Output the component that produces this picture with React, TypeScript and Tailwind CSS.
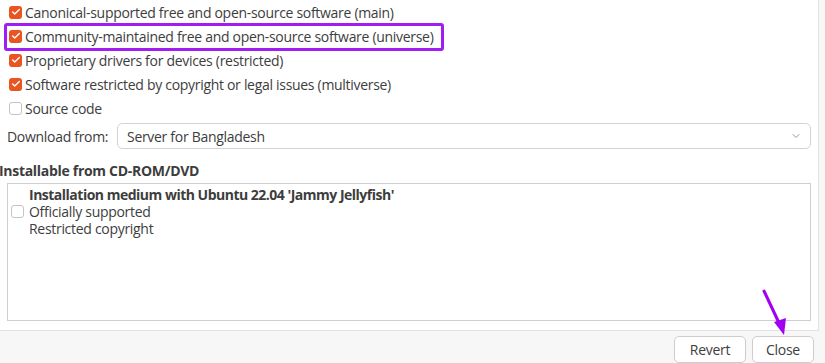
import { Check, ChevronDown } from "lucide-react";

const sources = [
  { label: "Canonical-supported free and open-source software (main)", checked: true },
  { label: "Community-maintained free and open-source software (universe)", checked: true },
  { label: "Proprietary drivers for devices (restricted)", checked: true },
  { label: "Software restricted by copyright or legal issues (multiverse)", checked: true },
  { label: "Source code", checked: false },
];

function Box({ checked }: { checked: boolean }) {
  if (checked) {
    return (
      <span className="flex h-[13px] w-[13px] shrink-0 items-center justify-center rounded-[3px] bg-[#e95420]">
        <Check className="h-[10px] w-[10px] text-white" strokeWidth={3.5} />
      </span>
    );
  }
  return (
    <span className="h-[13px] w-[13px] shrink-0 rounded-[3px] border border-[#c4c4c4] bg-white" />
  );
}

export default function App() {
  return (
    <div
      className="relative flex h-[363px] w-[825px] flex-col overflow-hidden bg-[#f7f7f7] text-[14px] tracking-[-0.3px] text-[#3d3d3d]"
      style={{ fontFamily: '"Open Sans", "Noto Sans", sans-serif' }}
    >
      <div className="flex h-[331px] w-[819px] flex-col border-r border-b border-[#e2e2e2] bg-white">
        <div className="flex flex-col pl-[9px]">
          {sources.map((s) => (
            <label key={s.label} className="flex h-[24px] items-center gap-[3px]">
              <Box checked={s.checked} />
              <span>{s.label}</span>
            </label>
          ))}
        </div>

        <div className="mt-[3px] flex items-center pl-[7px] pr-[7px]">
          <span className="w-[110px]">Download from:</span>
          <div className="flex h-[26px] flex-1 items-center justify-between rounded-[5px] border border-[#d3d3d3] pl-[9px] pr-[8px]">
            <span>Server for Bangladesh</span>
            <ChevronDown className="h-[12px] w-[12px] text-[#777]" strokeWidth={1.5} />
          </div>
        </div>

        <p className="mt-[12px] ml-[-1px] font-bold leading-[20px]">Installable from CD-ROM/DVD</p>

        <div className="mx-[7px] mt-[2px] h-[138px] border border-[#cfcfcf]">
          <div className="flex items-center gap-[5px] pl-[3px] pt-[2px]">
            <Box checked={false} />
            <div className="flex flex-col leading-[17px]">
              <span className="font-bold tracking-[-0.5px]">Installation medium with Ubuntu 22.04 'Jammy Jellyfish'</span>
              <span>Officially supported</span>
              <span>Restricted copyright</span>
            </div>
          </div>
        </div>
      </div>

      <div className="flex flex-1 items-end justify-end gap-[6px] pr-[11px]">
        <button className="h-[27px] w-[72px] rounded-[5px] border border-[#cdcdcd] bg-white">
          Revert
        </button>
        <button className="h-[27px] w-[62px] rounded-[5px] border border-[#cdcdcd] bg-white">
          Close
        </button>
      </div>

      <div className="absolute left-[4px] top-[23px] h-[28px] w-[440px] rounded-[3px] border-[3px] border-[#a11ef2]" />

      <svg className="absolute left-[755px] top-[285px]" width="40" height="55" viewBox="0 0 40 55">
        <line x1="9" y1="6" x2="25" y2="40" stroke="#a100f2" strokeWidth="3" strokeLinecap="round" />
        <polygon points="29,50 19,37 31,33" fill="#a100f2" />
      </svg>
    </div>
  );
}
